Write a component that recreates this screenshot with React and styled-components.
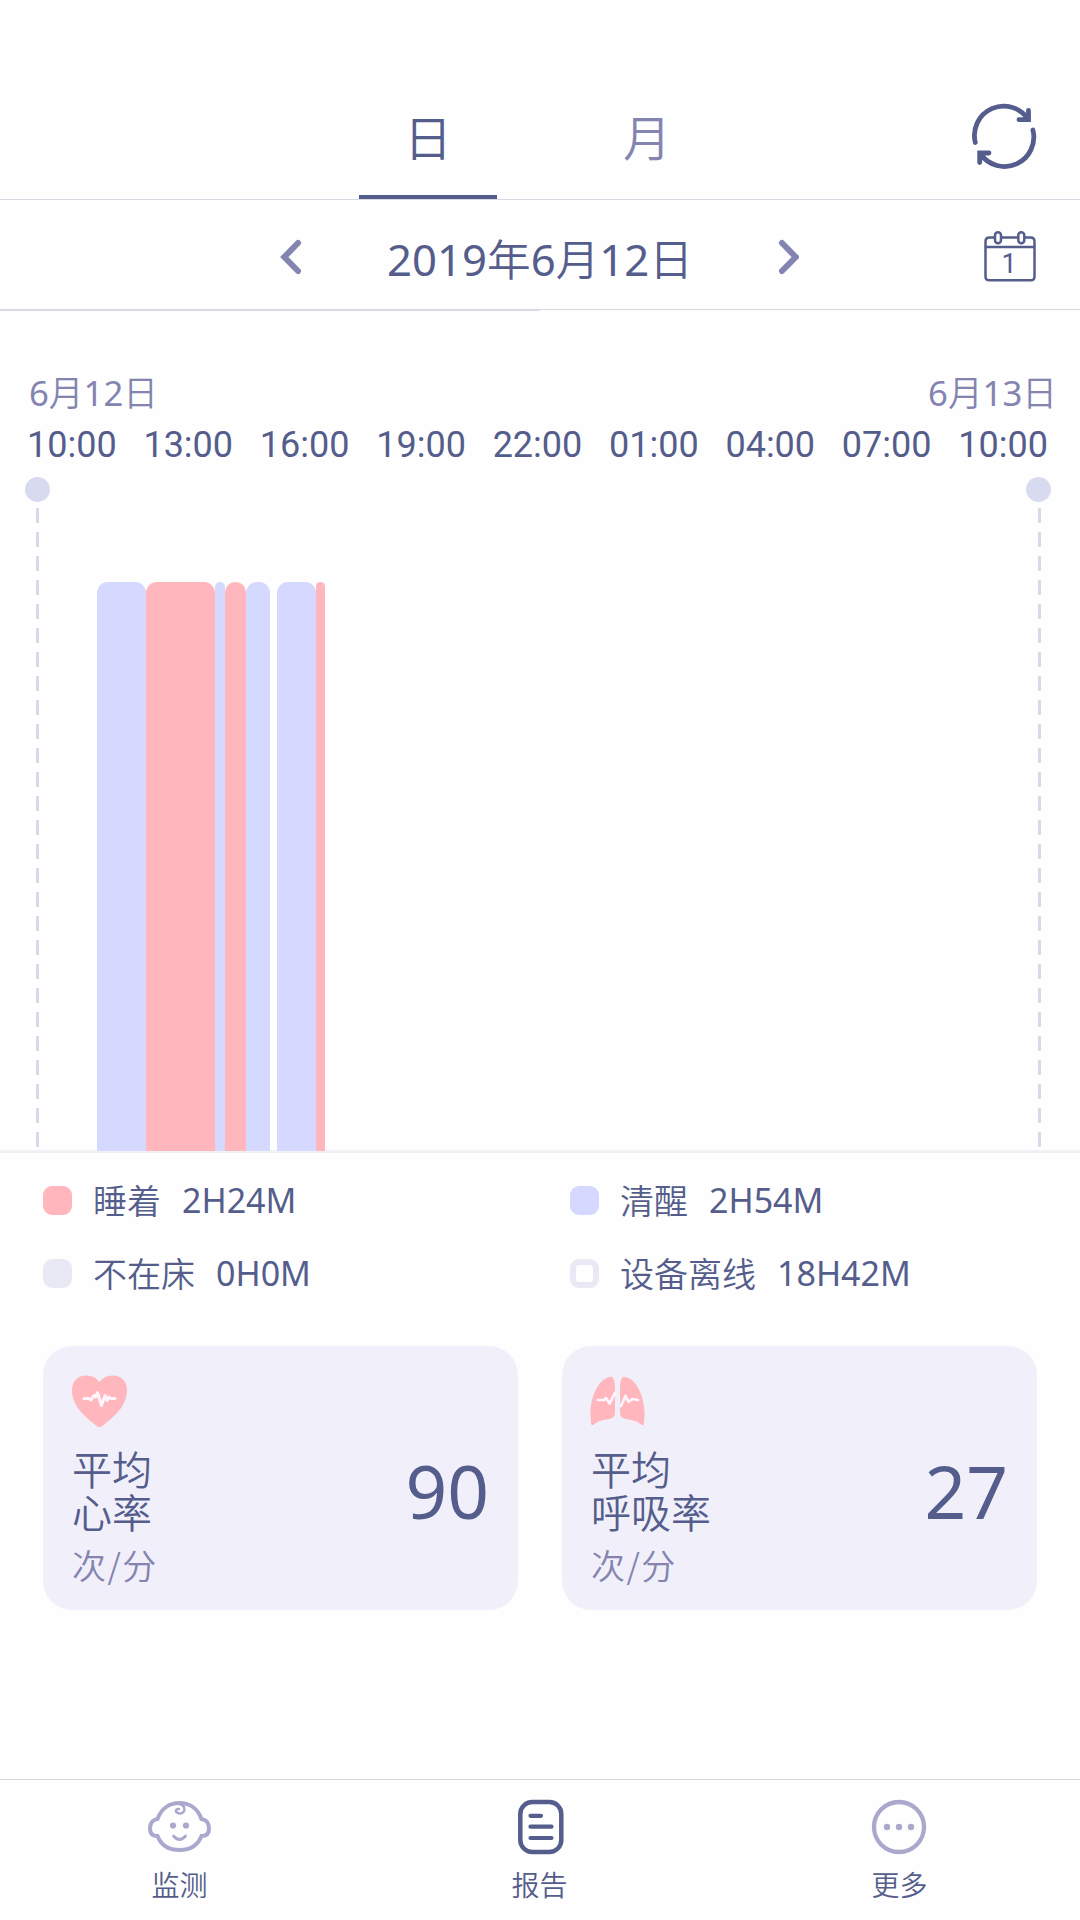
import React from "react";
import styled, { createGlobalStyle } from "styled-components";

const ink = "#545d8b";
const muted = "#8384b0";
const pink = "#ffb6bc";
const lilac = "#d5d8ff";
const sans = `"Noto Sans", "Noto Sans CJK SC", sans-serif`;
const han = `"Noto Sans CJK SC DemiLight", "Noto Sans CJK SC Light", "Noto Sans CJK SC", sans-serif`;

const Global = createGlobalStyle`
  * { box-sizing: border-box; }
  body { margin: 0; background: #fefefe; }
`;

const Screen = styled.main`
  display: flex;
  flex-direction: column;
  width: 1080px;
  height: 1920px;
  background: #fefefe;
  color: ${ink};
  font-family: ${sans};
`;

const Han = styled.span`
  font-family: ${han};
  font-weight: 300;
`;

const Header = styled.header`
  display: flex;
  height: 200px;
  padding: 76px 42px 0 359px;
  border-bottom: 1px solid #d8d9e2;
`;

const Tabs = styled.nav`
  display: flex;
  gap: 81px;
  flex: 1;
`;

const Tab = styled.button`
  width: 138px;
  height: 123px;
  padding: 0 0 2px;
  border: 0;
  border-bottom: 4px solid ${(p) => (p.$active ? ink : "transparent")};
  background: none;
  color: ${(p) => (p.$active ? ink : muted)};
  font: 300 48px/1 ${han};
`;

const RefreshIcon = styled.svg`
  width: 68px;
  height: 68px;
  margin-top: 26px;
`;

const DateBar = styled.section`
  display: flex;
  align-items: center;
  height: 109px;
  padding: 4px 44px 0 280px;
`;

const DateText = styled.div`
  width: 475px;
  padding: 2px 0 0 1px;
  text-align: center;
  font-size: 43.7px;
  line-height: 60px;
  white-space: nowrap;
`;

const Chevron = styled.svg`
  width: 22px;
  height: 36px;
`;

const CalendarIcon = styled.svg`
  width: 52px;
  height: 52px;
  margin-left: auto;
`;

const Progress = styled.div`
  height: 2px;
  border-top: 1px solid #d8d9e2;
  &::before {
    content: "";
    display: block;
    width: 540px;
    height: 2px;
    margin-top: -1px;
    background: #dad9ea;
  }
`;

const DayRow = styled.div`
  display: flex;
  justify-content: space-between;
  height: 50px;
  padding: 0 23px 0 29px;
  margin-top: 56px;
  color: ${muted};
  font-size: 34.7px;
  line-height: 48px;
`;

const TimeRow = styled.div`
  display: flex;
  justify-content: space-between;
  padding: 0 32px 0 27px;
  margin-top: 5px;
  font: 36px/46px Roboto, sans-serif;
`;

const Chart = styled.section`
  display: flex;
  justify-content: space-between;
  height: 676px;
  padding: 0 29px 0 25px;
  border-bottom: 3px solid #f0f0f5;
  margin-top: 9px;
`;

const Marker = styled.div`
  display: flex;
  flex-direction: column;
  align-items: center;
  width: 25px;
  &::before {
    content: "";
    width: 25px;
    height: 25px;
    margin-bottom: 6px;
    border-radius: 50%;
    background: #d8daef;
  }
`;

const DashLine = styled.i`
  width: 3px;
  height: 639px;
  margin-left: ${(p) => p.$shift}px;
  background: repeating-linear-gradient(#d9d9ea 0 15px, transparent 15px 24px);
`;

const Bars = styled.div`
  display: flex;
  align-items: flex-end;
  flex: 1;
  padding-left: 47px;
  margin-bottom: -1px;
`;

const Bar = styled.span`
  width: ${(p) => p.$w}px;
  height: 569px;
  margin-left: ${(p) => p.$gap || 0}px;
  border-radius: ${(p) => Math.min(11, p.$w / 2)}px ${(p) => Math.min(11, p.$w / 2)}px 0 0;
  background: ${(p) => (p.$asleep ? pink : lilac)};
`;

const Legend = styled.section`
  display: grid;
  grid-template-columns: 527px 1fr;
  grid-auto-rows: 73px;
  align-items: center;
  padding: 11px 0 0 43px;
`;

const LegendItem = styled.div`
  display: flex;
  align-items: center;
  font-size: 34px;
  line-height: 48px;
`;

const Swatch = styled.i`
  width: 29px;
  height: 29px;
  margin-right: 21px;
  border: 6px solid ${(p) => p.$edge};
  border-radius: 9px;
  background: ${(p) => p.$fill};
`;

const LegendText = styled.div`
  display: flex;
  align-items: center;
  gap: 21px;
  padding-bottom: 2px;
`;

const Cards = styled.section`
  display: flex;
  gap: 44px;
  padding: 0 43px;
  margin-top: 36px;
`;

const Card = styled.article`
  display: flex;
  flex: 1;
  flex-direction: column;
  height: 264px;
  padding: 29px 29px 0 28px;
  border-radius: 29px;
  background: #f1f0fa;
`;

const CardIcon = styled.svg`
  width: 57px;
  height: 55px;
`;

const CardBody = styled.div`
  display: flex;
  justify-content: space-between;
  margin-top: 17px;
`;

const CardLabel = styled.div`
  font: 300 40px/43px ${han};
  padding-left: 1px;
`;

const Unit = styled.div`
  margin-top: 10px;
  color: ${muted};
  font-size: 34px;
  letter-spacing: 1.5px;
`;

const Reading = styled.div`
  font-size: 73px;
  line-height: 88px;
`;

const BottomNav = styled.nav`
  display: grid;
  grid-template-columns: repeat(3, 1fr);
  height: 141px;
  margin-top: auto;
  border-top: 1px solid #d8d8de;
`;

const NavItem = styled.a`
  display: flex;
  flex-direction: column;
  align-items: center;
  padding-top: 17px;
  font: 300 28px/40px ${han};
`;

const NavIcon = styled.svg`
  width: 68px;
  height: 60px;
  margin-bottom: 7px;
`;

const NavLabel = styled.span`
  padding-right: 1px;
`;

const hours = ["10:00", "13:00", "16:00", "19:00", "22:00", "01:00", "04:00", "07:00", "10:00"];

const phases = [
  { w: 48.7 },
  { w: 69, asleep: true },
  { w: 10.7 },
  { w: 20.7, asleep: true },
  { w: 23.6 },
  { w: 38.5, gap: 7.5 },
  { w: 9.3, asleep: true },
];

const legend = [
  { name: "睡着", time: "2H24M", fill: pink, edge: pink },
  { name: "清醒", time: "2H54M", fill: lilac, edge: lilac },
  { name: "不在床", time: "0H0M", fill: "#e9e8f5", edge: "#e9e8f5" },
  { name: "设备离线", time: "18H42M", fill: "#fefefe", edge: "#e9e8f5" },
];

const Heart = () => (
  <CardIcon viewBox="0 0 57 55">
    <path fill={pink} d="M28.500 7C24 1 18 0.500 15 0.500C7 0.500 1 6 1 15C1 31 14 42 26.500 51.500Q28.500 53 30.500 51.500C43 42 56 31 56 15C56 6 50 0.500 42 0.500C39 0.500 33 1 28.500 7Z" />
    <path fill="none" stroke="#fff5fa" strokeWidth="3" strokeLinecap="round" strokeLinejoin="round" d="M13 23.500H18L20 25L23 20.500L24.500 22L26.500 17.500L30.500 30.500L34 20.500L36 25.500L38 22L39.500 23.500H44" />
  </CardIcon>
);

const Lungs = () => (
  <CardIcon viewBox="1 0 57 55">
    <path fill={pink} d="M21 2C24 1 26 5 26 13V37C26 42 24 43 20 44C14 45 9 46 4 50Q2 51 2 47C-1 27 8 4 21 2ZM36 2C33 1 31 5 31 13V37C31 42 33 43 37 44C43 45 48 46 53 50Q55 51 55 47C58 27 49 4 36 2Z" />
    <path fill="none" stroke="#fff5fa" strokeWidth="2.700" strokeLinecap="round" strokeLinejoin="round" d="M9 25H15L17 23L20.500 28.500L26 18M32 31L36.500 21L39.500 27L43 24L49 25" />
  </CardIcon>
);

export default function App() {
  return (
    <Screen>
      <Global />
      <Header>
        <Tabs>
          <Tab $active>日</Tab>
          <Tab>月</Tab>
        </Tabs>
        <RefreshIcon viewBox="970 102 68 68" fill="none" stroke={ink} strokeWidth="4.800" strokeLinecap="round" strokeLinejoin="miter">
          <path d="M975.300 142.500A29.300 29.300 0 0 1 1028 119M1028.500 110.500V119.700H1019" />
          <path d="M1032.900 130A29.300 29.300 0 0 1 980.500 154M979.700 162.500V153H989" />
        </RefreshIcon>
      </Header>
      <DateBar>
        <Chevron viewBox="280 239 22 36" fill="none" stroke={muted} strokeWidth="6" strokeLinecap="round">
          <path d="M298 243L284.300 257L298 271" />
        </Chevron>
        <DateText>
          2019<Han>年</Han>6<Han>月</Han>12<Han>日</Han>
        </DateText>
        <Chevron viewBox="0 0 22 36" fill="none" stroke={muted} strokeWidth="6" strokeLinecap="round">
          <path d="M5 4L18.700 18L5 32" />
        </Chevron>
        <CalendarIcon viewBox="984 231 52 52" fill="none" stroke={ink} strokeWidth="2.500">
          <path d="M994.500 237.500H989.500Q985.500 237.500 985.500 241.500V276.500Q985.500 280.300 989.500 280.300H1030.500Q1034.500 280.300 1034.500 276.500V241.500Q1034.500 237.500 1030.500 237.500H1025M1001.500 237.500H1018M985.500 247H1034.500" />
          <rect x="995" y="232.300" width="6" height="11" rx="3" />
          <rect x="1018.300" y="232.300" width="6" height="11" rx="3" />
          <text x="1009" y="273" textAnchor="middle" fill={ink} stroke="none" fontFamily="Roboto, sans-serif" fontSize="27">1</text>
        </CalendarIcon>
      </DateBar>
      <Progress />
      <DayRow>
        <span>
          6<Han>月</Han>12<Han>日</Han>
        </span>
        <span>
          6<Han>月</Han>13<Han>日</Han>
        </span>
      </DayRow>
      <TimeRow>
        {hours.map((h, i) => (
          <span key={i}>{h}</span>
        ))}
      </TimeRow>
      <Chart>
        <Marker>
          <DashLine $shift={0} />
        </Marker>
        <Bars>
          {phases.map((p, i) => (
            <Bar key={i} $w={p.w} $gap={p.gap} $asleep={p.asleep} />
          ))}
        </Bars>
        <Marker>
          <DashLine $shift={2} />
        </Marker>
      </Chart>
      <Legend>
        {legend.map((l) => (
          <LegendItem key={l.name}>
            <Swatch $fill={l.fill} $edge={l.edge} />
            <LegendText>
              <Han>{l.name}</Han>
              <span>{l.time}</span>
            </LegendText>
          </LegendItem>
        ))}
      </Legend>
      <Cards>
        <Card>
          <Heart />
          <CardBody>
            <CardLabel>
              平均
              <br />
              心率
              <Unit>次/分</Unit>
            </CardLabel>
            <Reading>90</Reading>
          </CardBody>
        </Card>
        <Card>
          <Lungs />
          <CardBody>
            <CardLabel>
              平均
              <br />
              呼吸率
              <Unit>次/分</Unit>
            </CardLabel>
            <Reading>27</Reading>
          </CardBody>
        </Card>
      </Cards>
      <BottomNav>
        <NavItem>
          <NavIcon viewBox="146 1797 68 60" fill="none" stroke="#a9a9ce" strokeWidth="4" strokeLinecap="round">
            <path d="M157.500 1819C161 1809 169 1803 179.500 1803S198 1809 201.500 1819C206 1819.500 209 1823 209 1828.500S206 1836 201.500 1836C198 1845 190 1850 179.500 1850S161 1845 157.500 1836C153 1836 150 1834 150 1828.500S153 1819.500 157.500 1819" />
            <path strokeWidth="2.500" d="M179 1804C186 1805 186 1813.500 180 1813.500C175 1813.500 174.500 1808.500 179 1809" />
            <path strokeWidth="2.800" d="M173.500 1836Q179.500 1843 185.500 1836" />
            <circle cx="173" cy="1825.500" r="3.100" fill="#a9a9ce" stroke="none" />
            <circle cx="186" cy="1825.500" r="3.100" fill="#a9a9ce" stroke="none" />
          </NavIcon>
          <NavLabel>监测</NavLabel>
        </NavItem>
        <NavItem>
          <NavIcon viewBox="506 1797 68 60" fill="none" stroke={ink} strokeWidth="4.500" strokeLinecap="round">
            <rect x="520.300" y="1802" width="41" height="50" rx="12" />
            <path strokeWidth="4.200" d="M530.500 1815.800H541M530.500 1826.700H551.500M530.500 1838H551.500" />
          </NavIcon>
          <NavLabel>报告</NavLabel>
        </NavItem>
        <NavItem>
          <NavIcon viewBox="866 1797 68 60" fill="none" stroke="#a9a9ce" strokeWidth="4.300">
            <circle cx="899" cy="1827" r="25" />
            <g fill="#a9a9ce" stroke="none">
              <circle cx="887" cy="1827" r="3.200" />
              <circle cx="899" cy="1827" r="3.200" />
              <circle cx="911" cy="1827" r="3.200" />
            </g>
          </NavIcon>
          <NavLabel>更多</NavLabel>
        </NavItem>
      </BottomNav>
    </Screen>
  );
}
